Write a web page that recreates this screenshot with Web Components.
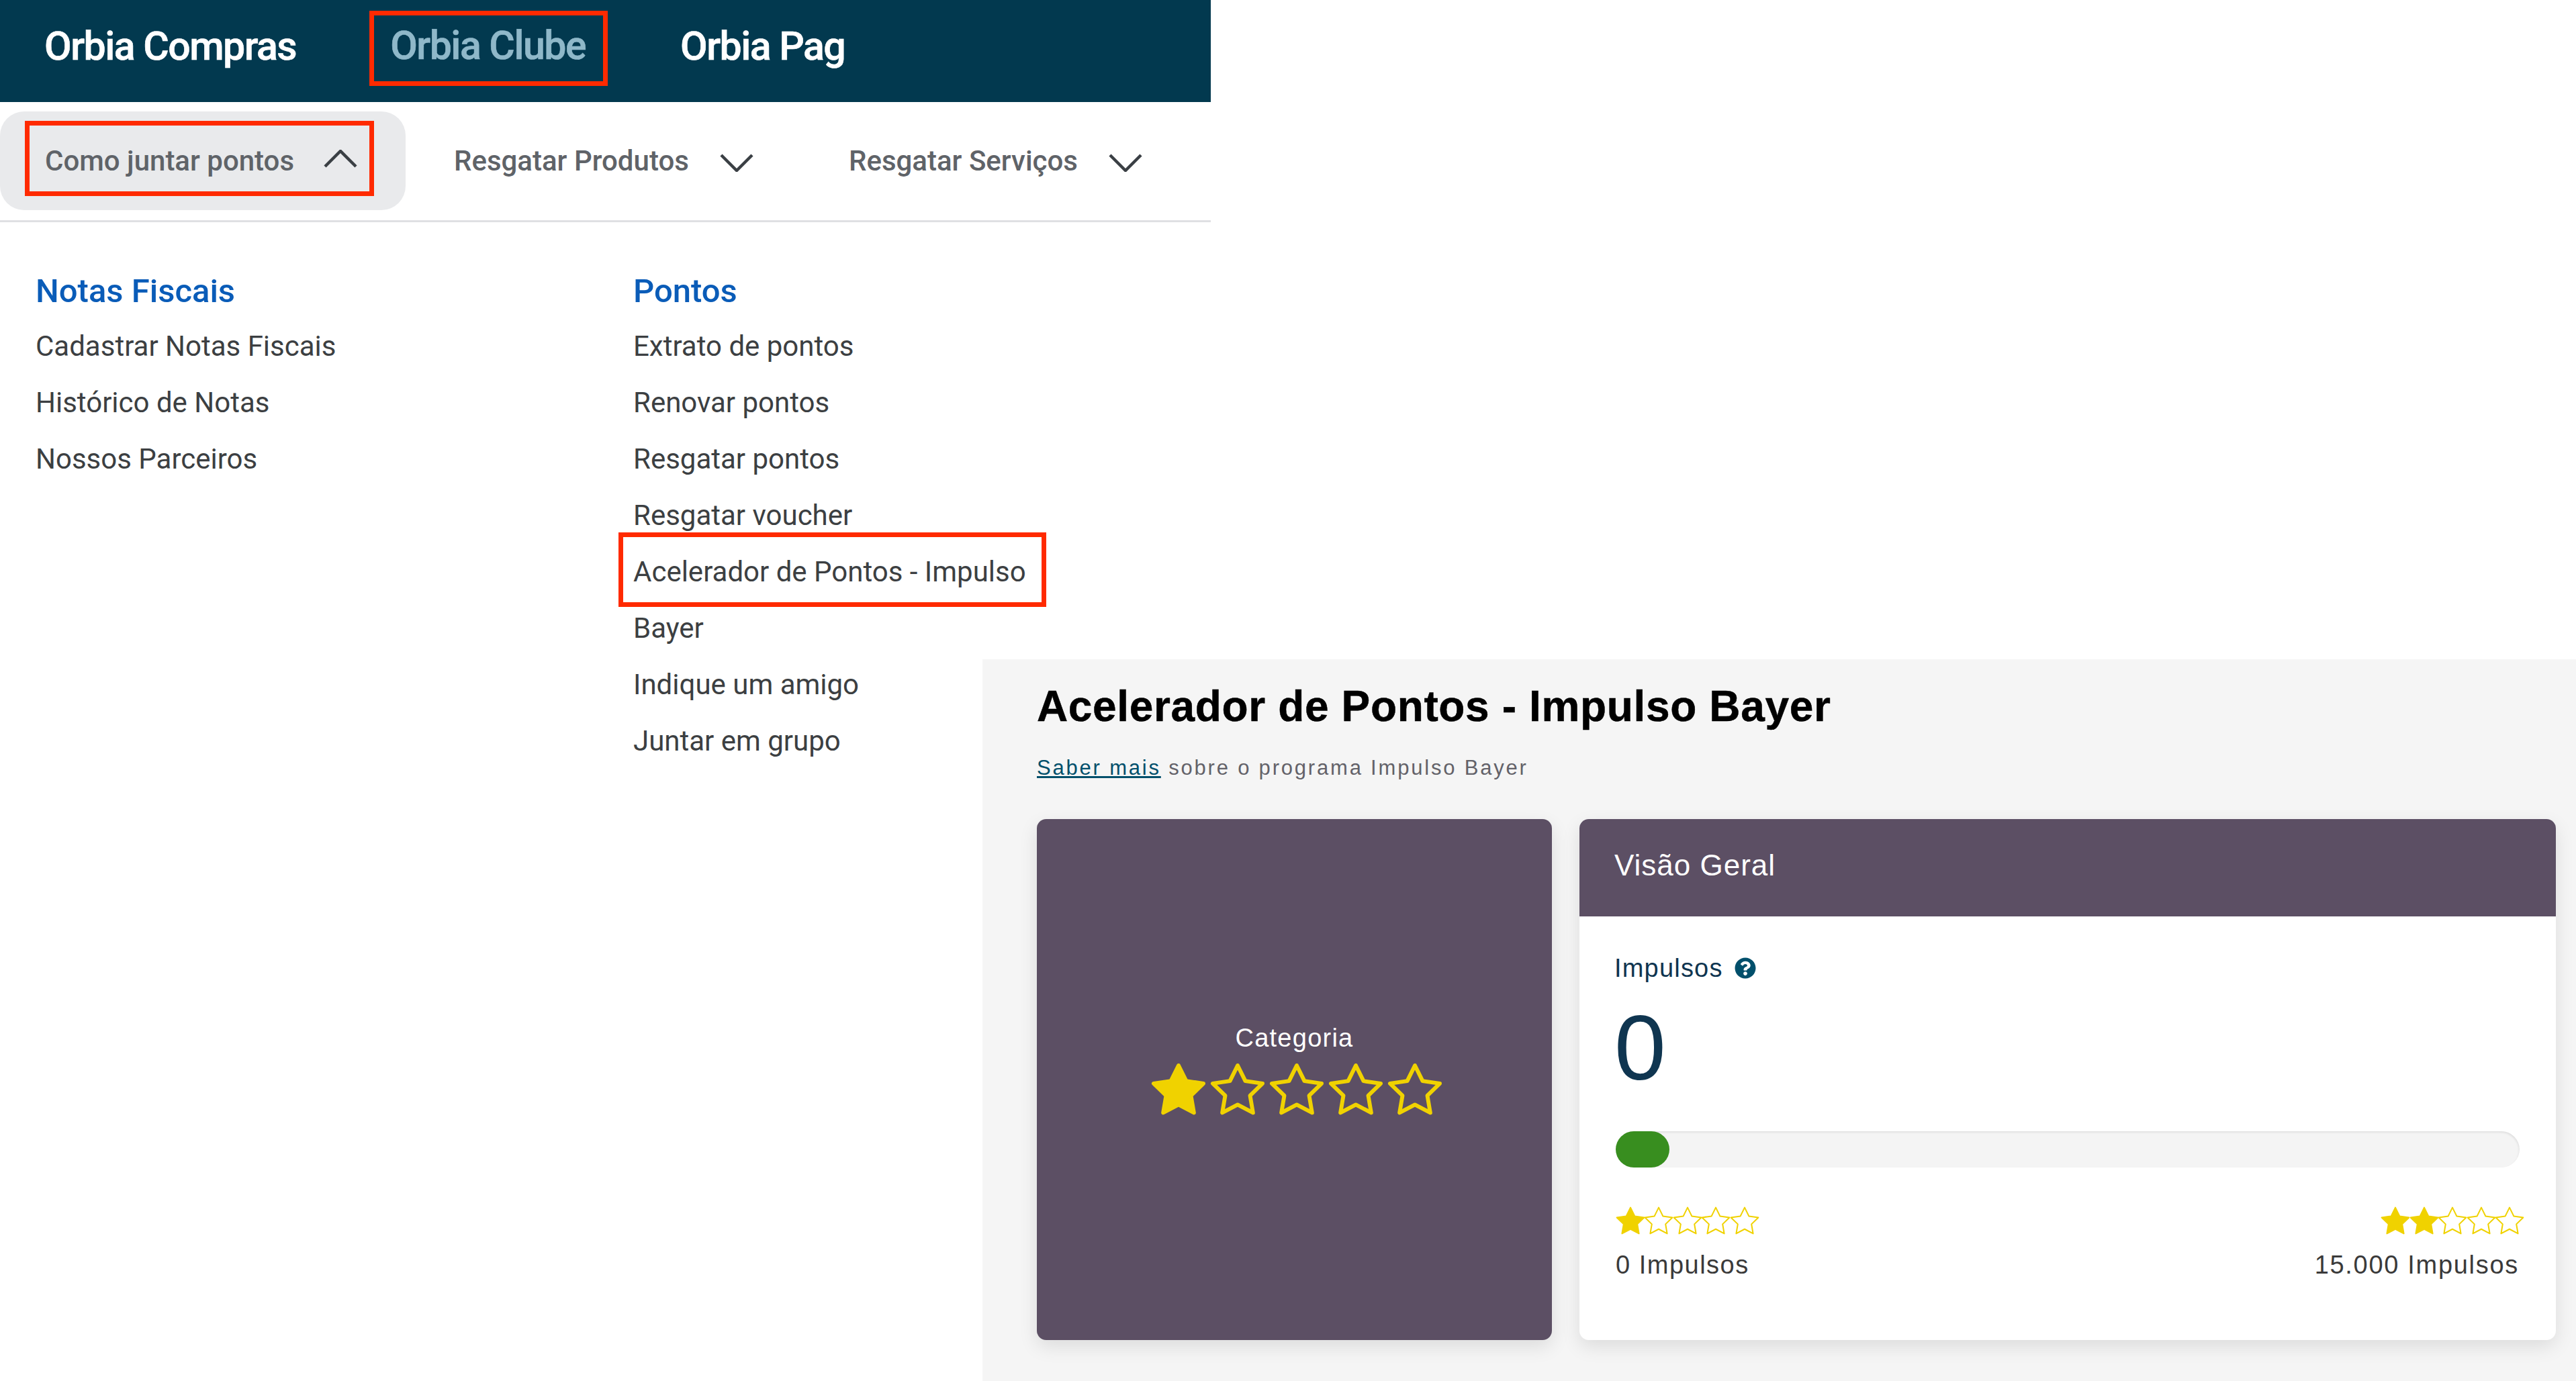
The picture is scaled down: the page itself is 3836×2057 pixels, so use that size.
<!DOCTYPE html>
<html lang="pt-BR">
<head>
<meta charset="utf-8">
<title>Orbia Clube - Acelerador de Pontos</title>
<style>
  html, body { margin: 0; background: #fff; }
  body { width: 3836px; height: 2057px; overflow: hidden; }
</style>
</head>
<body>
<orbia-page>
  <orbia-menu slot="menu">
    <orbia-topbar slot="top">
      <orbia-tab>Orbia Compras</orbia-tab>
      <orbia-tab active marked>Orbia Clube</orbia-tab>
      <orbia-tab>Orbia Pag</orbia-tab>
    </orbia-topbar>
    <orbia-subnav slot="sub">
      <orbia-drop open marked>Como juntar pontos</orbia-drop>
      <orbia-drop style="--w: 588px">Resgatar Produtos</orbia-drop>
      <orbia-drop style="--w: 538px">Resgatar Serviços</orbia-drop>
    </orbia-subnav>
    <orbia-links slot="links" title="Notas Fiscais" style="--col: 890px">
      <orbia-link>Cadastrar Notas Fiscais</orbia-link>
      <orbia-link>Histórico de Notas</orbia-link>
      <orbia-link>Nossos Parceiros</orbia-link>
    </orbia-links>
    <orbia-links slot="links" title="Pontos">
      <orbia-link>Extrato de pontos</orbia-link>
      <orbia-link>Renovar pontos</orbia-link>
      <orbia-link>Resgatar pontos</orbia-link>
      <orbia-link>Resgatar voucher</orbia-link>
      <orbia-link marked>Acelerador de Pontos - Impulso</orbia-link>
      <orbia-link>Bayer</orbia-link>
      <orbia-link>Indique um amigo</orbia-link>
      <orbia-link>Juntar em grupo</orbia-link>
    </orbia-links>
  </orbia-menu>

  <impulso-panel slot="panel">
    <category-card></category-card>
    <overview-card></overview-card>
  </impulso-panel>
</orbia-page>

<script>
const FONT_UI = `Roboto, "Liberation Sans", sans-serif`;
const FONT_PANEL = `"Liberation Sans", Arial, sans-serif`;

class OrbiaPage extends HTMLElement {
  constructor() {
    super();
    this.attachShadow({ mode: "open" });
    this.shadowRoot.innerHTML = /* html */ `
      <style>
        :host { display: grid; width: 3836px; height: 2057px; grid-template: 1fr / 1fr; }
        ::slotted(*) { grid-area: 1 / 1; }
        ::slotted(orbia-menu) { justify-self: start; align-self: start; }
        ::slotted(impulso-panel) { justify-self: end; align-self: end; }
      </style>
      <slot name="menu"></slot>
      <slot name="panel"></slot>
    `;
  }
}

class OrbiaMenu extends HTMLElement {
  constructor() {
    super();
    this.attachShadow({ mode: "open" });
    this.shadowRoot.innerHTML = /* html */ `
      <style>
        :host { display: block; width: 1803px; font-family: ${FONT_UI}; }
        .links { display: flex; padding: 70px 0 0 53px; }
      </style>
      <slot name="top"></slot>
      <slot name="sub"></slot>
      <div class="links"><slot name="links"></slot></div>
    `;
  }
}

class OrbiaTopbar extends HTMLElement {
  constructor() {
    super();
    this.attachShadow({ mode: "open" });
    this.shadowRoot.innerHTML = /* html */ `
      <style>
        :host {
          display: flex;
          align-items: center;
          gap: 108px;
          height: 152px;
          padding-left: 66px;
          background: #02394f;
        }
      </style>
      <slot></slot>
    `;
  }
}

class OrbiaTab extends HTMLElement {
  constructor() {
    super();
    this.attachShadow({ mode: "open" });
    this.shadowRoot.innerHTML = /* html */ `
      <style>
        :host {
          display: block;
          margin-top: -14px;
          font-size: 59px;
          font-weight: 500;
          line-height: 66px;
          letter-spacing: -1.5px;
          -webkit-text-stroke: 0.6px currentColor;
          color: #fff;
          white-space: nowrap;
        }
        :host([active]) { color: #8fb8c9; }
        :host([marked]) {
          display: flex;
          align-items: center;
          height: 112px;
          box-sizing: border-box;
          padding: 0 26px 8px 24px;
          border: 7px solid #ff2a00;
          margin-top: -8px;
          margin-left: 1px;
        }
      </style>
      <slot></slot>
    `;
  }
}

class OrbiaSubnav extends HTMLElement {
  constructor() {
    super();
    this.attachShadow({ mode: "open" });
    this.shadowRoot.innerHTML = /* html */ `
      <style>
        :host {
          display: flex;
          height: 179px;
          padding-top: 14px;
          box-sizing: border-box;
          border-bottom: 3px solid #dfe0e3;
        }
      </style>
      <slot></slot>
    `;
  }
}

class OrbiaDrop extends HTMLElement {
  constructor() {
    super();
    this.attachShadow({ mode: "open" });
  }

  connectedCallback() {
    const up = this.hasAttribute("open");
    const points = up ? "2,25 25,2 48,25" : "2,2 25,25 48,2";
    this.shadowRoot.innerHTML = /* html */ `
      <style>
        :host {
          display: flex;
          align-items: center;
          flex: none;
          box-sizing: border-box;
          width: var(--w, 604px);
          height: 147px;
          padding-left: 72px;
          font-size: 42px;
          font-weight: 500;
          color: #5f6368;
          white-space: nowrap;
        }
        :host([open]) {
          padding: 14px 47px 21px 37px;
          border-radius: 36px;
          background: #e9eaec;
        }
        .inner { display: flex; align-items: center; gap: 46px; }
        :host([open]) .inner {
          flex: 1;
          height: 100%;
          box-sizing: border-box;
          gap: 44px;
          padding: 7px 0 0 23px;
          border: 7px solid #ff2a00;
        }
        svg { width: 50px; height: 27px; flex: none; margin-top: ${up ? "-6px" : "6px"}; }
        polyline { fill: none; stroke: #3a3f44; stroke-width: 4.5; }
      </style>
      <div class="inner">
        <slot></slot>
        <svg viewBox="0 0 50 27"><polyline points="${points}"></polyline></svg>
      </div>
    `;
  }
}

class OrbiaLinks extends HTMLElement {
  constructor() {
    super();
    this.attachShadow({ mode: "open" });
  }

  connectedCallback() {
    this.shadowRoot.innerHTML = /* html */ `
      <style>
        :host { display: block; width: var(--col, auto); }
        h3 {
          margin: 0 0 7px;
          font-size: 49px;
          font-weight: 500;
          line-height: 66px;
          color: #0a5cb8;
        }
        .list { display: flex; flex-direction: column; }
      </style>
      <h3>${this.getAttribute("title")}</h3>
      <div class="list"><slot></slot></div>
    `;
  }
}

class OrbiaLink extends HTMLElement {
  constructor() {
    super();
    this.attachShadow({ mode: "open" });
    this.shadowRoot.innerHTML = /* html */ `
      <style>
        :host {
          display: block;
          height: 84px;
          font-size: 42px;
          line-height: 84px;
          color: #3c3f42;
          white-space: nowrap;
        }
        :host([marked]) {
          position: relative;
        }
        .mark { display: none; }
        :host([marked]) .mark {
          display: block;
          position: absolute;
          left: -22px;
          top: -17px;
          width: 637px;
          height: 111px;
          box-sizing: border-box;
          border: 7px solid #ff2a00;
        }
      </style>
      <slot></slot>
      <div class="mark"></div>
    `;
  }
}

class RatingStars extends HTMLElement {
  constructor() {
    super();
    this.attachShadow({ mode: "open" });
  }

  connectedCallback() {
    const filled = Number(this.getAttribute("filled") ?? 1);
    const hollow = this.getAttribute("hollow") ?? "none";
    let stars = "";
    for (let i = 0; i < 5; i++) {
      stars += `<svg viewBox="1.2 1.2 21.6 20.6"><polygon fill="${i < filled ? "#f0d200" : hollow}" points="12 2 15.09 8.26 22 9.27 17 14.14 18.18 21.02 12 17.77 5.82 21.02 7 14.14 2 9.27 8.91 8.26"></polygon></svg>`;
    }
    this.shadowRoot.innerHTML = /* html */ `
      <style>
        :host { display: flex; }
        svg { display: block; flex: none; width: var(--star, 80px); height: calc(var(--star, 80px) * 0.954); overflow: visible; }
        svg + svg { margin-left: var(--space, 8px); }
        polygon { stroke: #f0d200; stroke-width: var(--sw, 1.6); stroke-linejoin: round; }
      </style>
      ${stars}
    `;
  }
}

class ImpulsoPanel extends HTMLElement {
  constructor() {
    super();
    this.attachShadow({ mode: "open" });
    this.shadowRoot.innerHTML = /* html */ `
      <style>
        :host {
          display: block;
          width: 2373px;
          height: 1075px;
          box-sizing: border-box;
          padding: 30px 30px 0 81px;
          background: #f5f5f5;
          font-family: ${FONT_PANEL};
        }
        h1 {
          margin: 0;
          font-size: 64px;
          font-weight: 700;
          line-height: 80px;
          letter-spacing: 0.64px;
          -webkit-text-stroke: 0.5px #000;
          color: #000;
        }
        p {
          margin: 32px 0 0;
          font-size: 31px;
          line-height: 40px;
          letter-spacing: 2.8px;
          color: #636269;
        }
        a { color: #004f6b; text-decoration: underline; }
        .cards {
          display: grid;
          grid-template-columns: 767px 1fr;
          gap: 41px;
          height: 776px;
          margin-top: 56px;
        }
      </style>
      <h1>Acelerador de Pontos - Impulso Bayer</h1>
      <p><a>Saber mais</a> sobre o programa Impulso Bayer</p>
      <div class="cards"><slot></slot></div>
    `;
  }
}

class CategoryCard extends HTMLElement {
  constructor() {
    super();
    this.attachShadow({ mode: "open" });
    this.shadowRoot.innerHTML = /* html */ `
      <style>
        :host {
          display: flex;
          flex-direction: column;
          align-items: center;
          justify-content: center;
          gap: 16px;
          padding-bottom: 32px;
          box-sizing: border-box;
          border-radius: 14px;
          background: #5c4f64;
          box-shadow: 0 10px 28px rgba(0, 0, 0, 0.1);
          color: #fff;
        }
        .label { font-size: 38px; line-height: 44px; letter-spacing: 1.25px; }
        rating-stars { margin-left: 7px; }
      </style>
      <div class="label">Categoria</div>
      <rating-stars filled="1"></rating-stars>
    `;
  }
}

class OverviewCard extends HTMLElement {
  constructor() {
    super();
    this.attachShadow({ mode: "open" });
    this.shadowRoot.innerHTML = /* html */ `
      <style>
        :host {
          display: block;
          border-radius: 14px;
          background: #fff;
          box-shadow: 0 10px 28px rgba(0, 0, 0, 0.1);
          overflow: hidden;
        }
        header {
          height: 145px;
          box-sizing: border-box;
          padding: 44px 0 0 52px;
          background: #5c4f64;
          color: #fff;
          font-size: 44px;
          line-height: 50px;
          letter-spacing: 1px;
        }
        .body { padding: 55px 54px 0; }
        .label {
          display: flex;
          align-items: center;
          gap: 17px;
          margin-left: -2px;
          font-size: 38px;
          line-height: 44px;
          letter-spacing: 1.2px;
          color: #0f3550;
        }
        .label svg { width: 32px; height: 32px; fill: #004f6b; }
        .value {
          margin: 16px 0 0 -2px;
          font-size: 138px;
          line-height: 160px;
          color: #0f3550;
        }
        .track {
          height: 54px;
          margin-top: 45px;
          border-radius: 27px;
          background: #f4f4f4;
          box-shadow: inset -1px 2px 3px rgba(0, 0, 0, 0.08);
        }
        .fill { width: 80px; height: 100%; border-radius: 27px; background: #388e1f; }
        .ends {
          display: flex;
          justify-content: space-between;
          margin-top: 58px;
          font-size: 38px;
          letter-spacing: 1.5px;
          color: #3a3a3a;
        }
        .end { display: flex; flex-direction: column; gap: 23px; }
        .end.right { align-items: flex-end; letter-spacing: 1.7px; }
        .end.right rating-stars { margin-right: -7px; }
        .end.right span { margin-right: 1px; }
        .end span { line-height: 44px; }
        rating-stars { --star: 44px; --space: -1.6px; --sw: 1; }
      </style>
      <header>Visão Geral</header>
      <div class="body">
        <div class="label">Impulsos
          <svg viewBox="0 0 512 512"><path d="M504 256c0 136.997-111.043 248-248 248S8 392.997 8 256C8 119.083 119.043 8 256 8s248 111.083 248 248zM262.655 90c-54.497 0-89.255 22.957-116.549 63.758-3.536 5.286-2.353 12.415 2.715 16.258l34.699 26.31c5.205 3.947 12.621 3.008 16.665-2.122 17.864-22.658 30.113-35.797 57.303-35.797 20.429 0 45.698 13.148 45.698 32.958 0 14.976-12.363 22.667-32.534 33.976C247.128 238.528 216 254.941 216 296v4c0 6.627 5.373 12 12 12h56c6.627 0 12-5.373 12-12v-1.333c0-28.462 83.186-29.647 83.186-106.667 0-58.002-60.165-102-116.531-102zM256 338c-25.365 0-46 20.635-46 46 0 25.364 20.635 46 46 46s46-20.636 46-46c0-25.365-20.635-46-46-46z"></path></svg>
        </div>
        <div class="value">0</div>
        <div class="track"><div class="fill"></div></div>
        <div class="ends">
          <div class="end"><rating-stars filled="1" hollow="#fff"></rating-stars><span>0 Impulsos</span></div>
          <div class="end right"><rating-stars filled="2" hollow="#fff"></rating-stars><span>15.000 Impulsos</span></div>
        </div>
      </div>
    `;
  }
}

customElements.define("orbia-page", OrbiaPage);
customElements.define("orbia-menu", OrbiaMenu);
customElements.define("orbia-topbar", OrbiaTopbar);
customElements.define("orbia-tab", OrbiaTab);
customElements.define("orbia-subnav", OrbiaSubnav);
customElements.define("orbia-drop", OrbiaDrop);
customElements.define("orbia-links", OrbiaLinks);
customElements.define("orbia-link", OrbiaLink);
customElements.define("rating-stars", RatingStars);
customElements.define("impulso-panel", ImpulsoPanel);
customElements.define("category-card", CategoryCard);
customElements.define("overview-card", OverviewCard);
</script>
</body>
</html>
